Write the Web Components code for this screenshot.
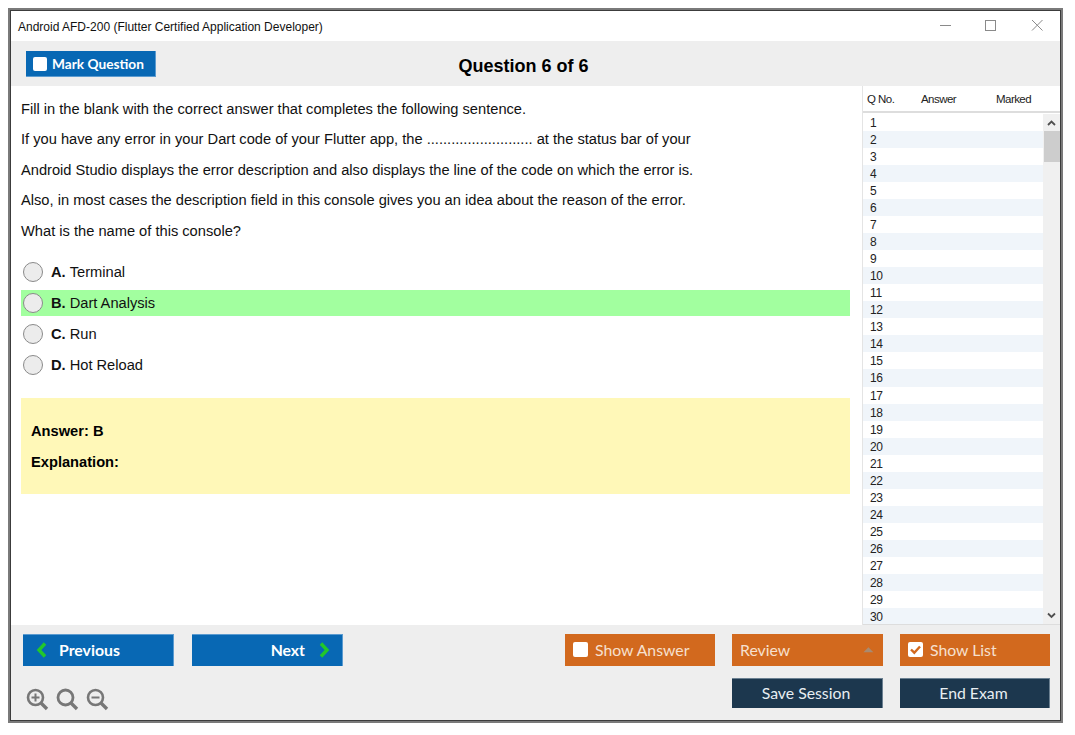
<!DOCTYPE html>
<html lang="en"><head><meta charset="utf-8"><title>Exam</title>
<style>
html,body{margin:0;background:#fff}
body{padding:8px 0 0 8px;font-family:"Liberation Sans",Arial,sans-serif;color:#000}
</style></head><body>
<exam-window>
  <title-bar slot="title">Android AFD-200 (Flutter Certified Application Developer)</title-bar>
  <top-bar slot="top">Question 6 of 6</top-bar>
  <question-pane slot="main">
    <p>Fill in the blank with the correct answer that completes the following sentence.</p>
    <p>If you have any error in your Dart code of your Flutter app, the .......................... at the status bar of your</p>
    <p>Android Studio displays the error description and also displays the line of the code on which the error is.</p>
    <p>Also, in most cases the description field in this console gives you an idea about the reason of the error.</p>
    <p>What is the name of this console?</p>
    <option-row slot="options" letter="A.">Terminal</option-row>
    <option-row slot="options" letter="B." correct>Dart Analysis</option-row>
    <option-row slot="options" letter="C.">Run</option-row>
    <option-row slot="options" letter="D.">Hot Reload</option-row>
    <answer-box slot="answer"><div>Answer: B</div><div>Explanation:</div></answer-box>
  </question-pane>
  <question-list slot="side" count="30"></question-list>
  <exam-footer slot="footer"></exam-footer>
</exam-window>
<script>
function def(name, html, setup){
  customElements.define(name, class extends HTMLElement{
    constructor(){super();this.attachShadow({mode:'open'}).innerHTML=html;}
    connectedCallback(){ if(setup) setup.call(this,this.shadowRoot); }
  });
}
def('exam-window',`<style>
:host{display:block;width:1055px;height:715px;box-sizing:border-box;border:2px solid #7a7a7a}
.in{height:100%;box-sizing:border-box;border:1px solid #3c3c3c;display:flex;flex-direction:column;background:#fff}
.mid{flex:1;display:flex;min-height:0}
</style><div class="in"><slot name="title"></slot><slot name="top"></slot><div class="mid"><slot name="main"></slot><slot name="side"></slot></div><slot name="footer"></slot></div>`);

def('title-bar',`<style>
:host{display:flex;align-items:center;height:30px;padding:0 0 0 7px;font:12px "Liberation Sans",Arial,sans-serif;color:#111;background:#fff}
.t{flex:1;padding-top:2px}
.c{display:flex;gap:0;height:30px}
.c svg{display:block;width:46px;height:30px}
</style><div class="t"><slot></slot></div><div class="c">
<svg viewBox="0 0 46 30"><path d="M18 14.5H29" stroke="#8a8a8a" fill="none"/></svg>
<svg viewBox="0 0 46 30"><rect x="17.5" y="9.5" width="10" height="10" stroke="#8a8a8a" fill="none"/></svg>
<svg viewBox="0 0 46 30"><path d="M18 9L28.5 19.5M28.5 9L18 19.5" stroke="#8a8a8a" fill="none"/></svg>
</div>`);

def('top-bar',`<style>
:host{display:block;height:45px;background:#eee;position:relative;box-sizing:border-box}
.row{display:flex;align-items:flex-start;height:45px;padding:10px 0 0 15px;box-sizing:border-box}
.h{position:absolute;left:0;right:0;top:15px;text-align:center;padding-right:24px;font:bold 18px/21px "Liberation Sans",Arial,sans-serif}
.b{display:flex;align-items:center;gap:5px;width:130px;height:26px;box-sizing:border-box;padding-left:7px;background:#0868b4;color:#fff;font:bold 13.7px "Lato",sans-serif;border-bottom:1px solid #5b9bd0;border-right:1px solid #5b9bd0}
.k{width:14px;height:14px;background:#fff;border-radius:2px}
</style><div class="row"><div class="b"><span class="k"></span>Mark Question</div></div><div class="h"><slot></slot></div>`);

def('question-pane',`<style>
:host{display:block;flex:1;min-width:0;padding:14.75px 12px 0 10px;font:14.67px/17px "Liberation Sans",Arial,sans-serif;color:#111}
.q{display:flex;flex-direction:column;gap:13.5px}
.o{display:flex;flex-direction:column;gap:5px;margin-top:19.25px}
.a{margin-top:20px}
::slotted(p){margin:0;height:17px}
</style><div class="q"><slot></slot></div><div class="o"><slot name="options"></slot></div><div class="a"><slot name="answer"></slot></div>`);

def('option-row',`<style>
:host{display:flex;align-items:center;height:26px;background:transparent}
:host([correct]){background:#a2ff9f}
.r{width:18px;height:18px;border:1px solid #8a8a8a;border-radius:50%;background:#ececec;margin-left:2px;margin-right:8px}
b{margin-right:4px}
</style><span class="r"></span><b></b><slot></slot>`,function(s){s.querySelector('b').textContent=this.getAttribute('letter');});

def('answer-box',`<style>
:host{display:block;height:96px;box-sizing:border-box;padding:25px 10px 0;background:#fff8b8;font-weight:bold;color:#000;line-height:17px}
::slotted(div){margin-bottom:14px}
</style><slot></slot>`);

def('question-list',`<style>
:host{display:flex;flex-direction:column;width:198px;height:539px;box-sizing:border-box;border-left:1px solid #e4e4e4;font:12px "Liberation Sans",Arial,sans-serif;color:#222}
.h{display:grid;grid-template-columns:54px 75px 1fr;align-items:center;height:26px;padding-left:4px;border-bottom:2px solid #ddd;box-sizing:border-box;margin-top:1px;font-size:11.5px;letter-spacing:-.55px}
.b{flex:1;display:flex;min-height:0;margin-top:1px;border-bottom:1px solid #ddd}
.l{flex:1;overflow:hidden}
.r{height:17.04px;line-height:19px;padding-left:7px;box-sizing:border-box;letter-spacing:-.3px}
.r:nth-child(even){background:#f0f5fa}
.s{width:17px;background:#f0f0f0;display:flex;flex-direction:column;align-items:center}
.s svg{display:block;width:17px;height:17px}
.t{width:16px;height:31px;background:#cdcdcd}
.g{flex:1}
</style><div class="h"><span>Q No.</span><span>Answer</span><span>Marked</span></div>
<div class="b"><div class="l"></div><div class="s">
<svg viewBox="0 0 17 17"><path d="M5 11L8.5 7.5L12 11" fill="none" stroke="#505050" stroke-width="1.8"/></svg>
<div class="t"></div><div class="g"></div>
<svg viewBox="0 0 17 17"><path d="M5 6.5L8.5 10L12 6.5" fill="none" stroke="#505050" stroke-width="1.8"/></svg>
</div></div>`,function(s){
  const l=s.querySelector('.l');const n=+this.getAttribute('count');
  for(let i=1;i<=n;i++){const d=document.createElement('div');d.className='r';d.textContent=i;l.appendChild(d);}
});

def('exam-button',`<style>
:host{display:flex;align-items:center;box-sizing:border-box;width:var(--w,100%);height:var(--h,32px);padding:0 8px 2px;color:#fff;font:15.8px "Lato",sans-serif;background:var(--bg,#d2691e);border-top:1px solid var(--edge,transparent);border-right:1px solid var(--edge,transparent)}
:host([center]){justify-content:center;padding-right:10px}
</style><slot name="before"></slot><slot></slot><slot name="after"></slot>`);

def('exam-footer',`<style>
:host{display:flex;height:95px;background:#eee;box-sizing:border-box;padding:9px 10px 0 12px;justify-content:space-between}
.left{display:flex;flex-direction:column}
.nav{display:grid;grid-template-columns:151px 151px;gap:18px}
.zoom{display:flex;gap:6px;margin-top:21px;margin-left:2px}
.zoom svg{width:24px;height:24px;display:block}
.right{display:grid;grid-template-columns:150px 151px 150px;column-gap:17px;row-gap:12px;grid-auto-rows:min-content}
.blue{--bg:#0868b4;--edge:#5b9bd0;font-weight:bold}
.or{--bg:#d2691e;color:#f6e0cf}
.dk{--bg:#1c374e;--h:30px;--edge:#6b8091;color:#e8eef2}
.k{width:15px;height:15px;background:#fff;border-radius:2px;margin-right:7px;flex:none;display:block}
svg.ar{width:12px;height:16px;display:block;flex:none}
</style><div class="left"><div class="nav">
<exam-button class="blue"><svg slot="before" class="ar" style="margin:0 11px 0 5px" viewBox="0 0 12 16"><path d="M9 1.5L3 8L9 14.5" fill="none" stroke="#22c72a" stroke-width="3.4"/></svg>Previous</exam-button>
<exam-button class="blue" style="justify-content:flex-end"><span>Next</span><svg slot="after" class="ar" style="margin:0 4px 0 13px" viewBox="0 0 12 16"><path d="M3 1.5L9 8L3 14.5" fill="none" stroke="#22c72a" stroke-width="3.4"/></svg></exam-button>
</div><div class="zoom">
<svg viewBox="0 0 24 24"><circle cx="10.5" cy="10.5" r="7.5" fill="none" stroke="#777" stroke-width="2.6"/><path d="M16 16L22 22" stroke="#777" stroke-width="3.4"/><path d="M6.5 10.5H14.5M10.5 6.5V14.5" stroke="#777" stroke-width="2"/></svg>
<svg viewBox="0 0 24 24"><circle cx="10.5" cy="10.5" r="7.5" fill="none" stroke="#777" stroke-width="2.8"/><path d="M16 16L22 22" stroke="#777" stroke-width="3.4"/></svg>
<svg viewBox="0 0 24 24"><circle cx="10.5" cy="10.5" r="7.5" fill="none" stroke="#777" stroke-width="2.6"/><path d="M16 16L22 22" stroke="#777" stroke-width="3.4"/><path d="M6.5 10.5H14.5" stroke="#777" stroke-width="2"/></svg>
</div></div>
<div class="right">
<exam-button class="or"><span slot="before" class="k"></span>Show Answer</exam-button>
<exam-button class="or"><span>Review</span><svg slot="after" style="display:block;width:12px;height:8px;margin-left:73px" viewBox="0 0 12 8"><path d="M6 1L11.5 6.5H.5Z" fill="#a98a70"/></svg></exam-button>
<exam-button class="or"><svg slot="before" style="display:block;width:15px;height:15px;margin-right:7px;flex:none" viewBox="0 0 15 15"><rect width="15" height="15" rx="2" fill="#fff"/><path d="M3 7.5L6.3 10.7L12 4.5" fill="none" stroke="#d2691e" stroke-width="2.4"/></svg>Show List</exam-button>
<span></span>
<exam-button class="dk" center>Save Session</exam-button>
<exam-button class="dk" center>End Exam</exam-button>
</div>`);
</script>
</body></html>
